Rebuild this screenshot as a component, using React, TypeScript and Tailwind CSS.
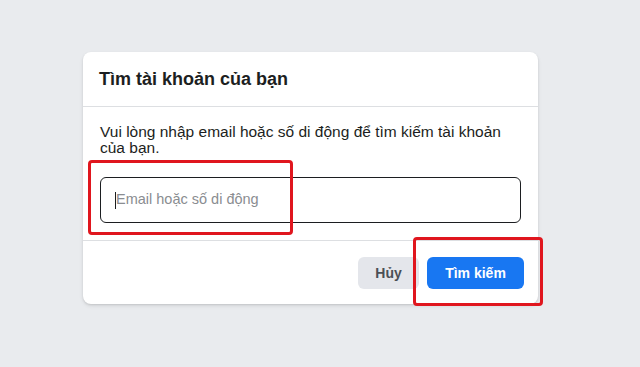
export default function App() {
  return (
    <div
      className="relative h-[367px] w-[640px] overflow-hidden bg-[#e9ebee] pt-[52px] pl-[83px]"
      style={{ fontFamily: '"Liberation Sans", Arial, sans-serif' }}
    >
      <div className="w-[455px] rounded-lg bg-white shadow-[0_1px_2px_rgba(0,0,0,0.1),0_2px_4px_rgba(0,0,0,0.08)]">
        <div className="flex h-[55px] items-center border-b border-[#dddfe2] px-[16px]">
          <h2 className="text-[18px] font-bold text-[#1c1e21]">Tìm tài khoản của bạn</h2>
        </div>

        <div className="border-b border-[#dddfe2] px-[17px] pt-[17px] pb-[17px]">
          <p className="text-[15.5px] leading-[16px] text-[#1c1e21]">
            Vui lòng nhập email hoặc số di động để tìm kiếm tài khoản của bạn.
          </p>
          <div className="mt-[21px] flex h-[46px] items-center rounded-md border-[1.5px] border-[#1c1e21] px-[14px]">
            <span className="h-[17px] w-px bg-[#1c1e21]" />
            <span className="text-[14.5px] text-[#8a8d91]">Email hoặc số di động</span>
          </div>
        </div>

        <div className="flex justify-end gap-2 px-[14px] pt-[16px] pb-[15px]">
          <button
            type="button"
            className="h-[32px] w-[61px] rounded-md bg-[#e4e6eb] text-[14px] font-bold text-[#4b4f56]"
          >
            Hủy
          </button>
          <button
            type="button"
            className="h-[32px] w-[97px] rounded-md bg-[#1877f2] text-[14px] font-bold text-white"
          >
            Tìm kiếm
          </button>
        </div>
      </div>

      <div className="absolute left-[88px] top-[160px] h-[75px] w-[205px] rounded-sm border-[3px] border-[#e0161e]" />
      <div className="absolute left-[413px] top-[237px] h-[69px] w-[130px] rounded-sm border-[3px] border-[#e0161e]" />
    </div>
  );
}
